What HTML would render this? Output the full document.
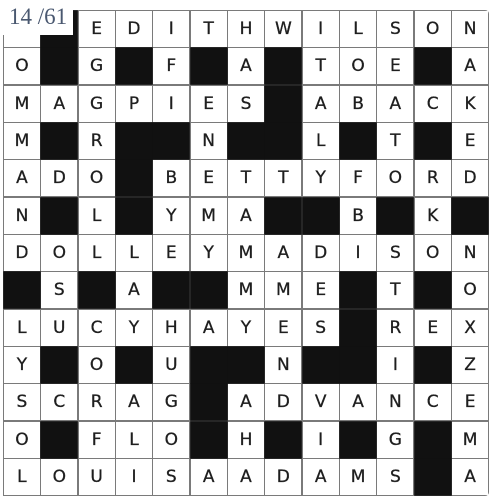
<!DOCTYPE html>
<html><head><meta charset="utf-8"><style>
body{margin:0;background:#fff;width:495px;height:502px;position:relative;overflow:hidden}
#g{position:absolute;left:3px;top:10px;width:486px;height:486px;box-sizing:border-box;padding:1px;background:#7a7a7a;display:grid;grid-template-columns:repeat(13,1fr);grid-template-rows:repeat(13,1fr);gap:1.5px;border-radius:0 4px 4px 0}
#g div{background:#fff;display:flex;align-items:center;justify-content:center;font-family:"DejaVu Sans","Liberation Sans",sans-serif;font-size:17px;color:#1e1e1e;-webkit-text-stroke:0.3px #1e1e1e}
#g div.b{background:#111;box-shadow:0 0 0 0.8px #111}
#lab{position:absolute;left:0;top:0;width:73px;height:35px;background:#fff;font-family:"Liberation Serif",serif;font-size:23px;color:#4a5870;line-height:33px;padding-left:9px;box-sizing:border-box;z-index:2}
</style></head><body>
<div id="g"></div>
<div id="lab">14 /61</div>
<script>
var rows=["C#EDITHWILSON","O#G#F#A#TOE#A","MAGPIES#ABACK","M#R##N##L#T#E","ADO#BETTYFORD","N#L#YMA##B#K#","DOLLEYMADISON","#S#A##MME#T#O","LUCYHAYES#REX","Y#O#U##N##I#Z","SCRAG#ADVANCE","O#FLO#H#I#G#M","LOUISAADAMS#A"];
var g=document.getElementById('g'),h='';
rows.forEach(function(r){for(var i=0;i<13;i++){var c=r[i];h+=c=='#'?'<div class="b"></div>':'<div>'+c+'</div>';}});
g.innerHTML=h;
</script>
</body></html>
